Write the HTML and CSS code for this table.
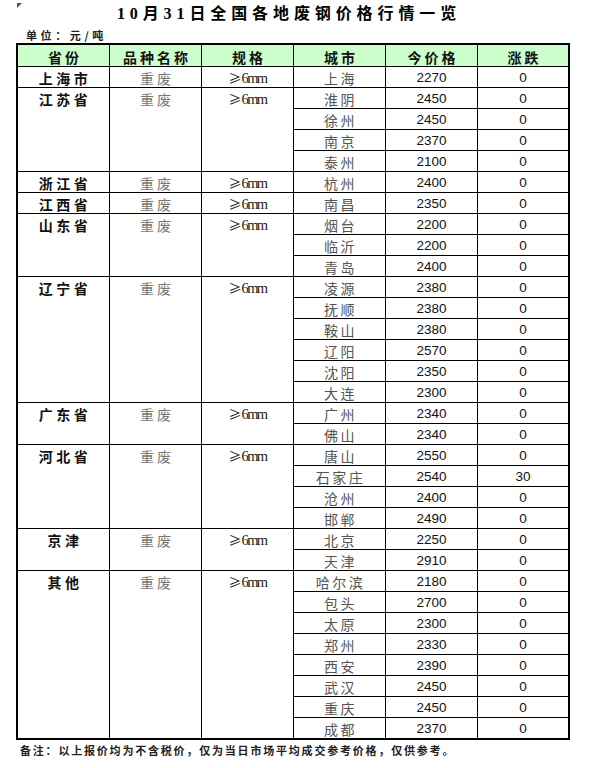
FILE: index.html
```html
<!DOCTYPE html>
<html lang="zh-CN">
<head>
<meta charset="utf-8">
<title>10月31日全国各地废钢价格行情一览</title>
<link rel="stylesheet" href="styles.css">
</head>
<body>
<div class="page">
  <span class="marker"></span>
  <h1 class="title">10月31日全国各地废钢价格行情一览</h1>
  <div class="unit">单位：元/吨</div>
  <div class="sheet">
    <div class="hd">省份</div><div class="hd">品种名称</div><div class="hd">规格</div><div class="hd">城市</div><div class="hd">今价格</div><div class="hd">涨跌</div>

    <div class="prov">上海市</div><div class="kind">重废</div><div class="spec"><span class="ge">≥</span>6mm</div><div class="city">上海</div><div class="num">2270</div><div class="num">0</div>

    <div class="prov s4">江苏省</div><div class="kind s4">重废</div><div class="spec s4"><span class="ge">≥</span>6mm</div><div class="city">淮阴</div><div class="num">2450</div><div class="num">0</div>
    <div class="city">徐州</div><div class="num">2450</div><div class="num">0</div>
    <div class="city">南京</div><div class="num">2370</div><div class="num">0</div>
    <div class="city">泰州</div><div class="num">2100</div><div class="num">0</div>

    <div class="prov">浙江省</div><div class="kind">重废</div><div class="spec"><span class="ge">≥</span>6mm</div><div class="city">杭州</div><div class="num">2400</div><div class="num">0</div>

    <div class="prov">江西省</div><div class="kind">重废</div><div class="spec"><span class="ge">≥</span>6mm</div><div class="city">南昌</div><div class="num">2350</div><div class="num">0</div>

    <div class="prov s3">山东省</div><div class="kind s3">重废</div><div class="spec s3"><span class="ge">≥</span>6mm</div><div class="city">烟台</div><div class="num">2200</div><div class="num">0</div>
    <div class="city">临沂</div><div class="num">2200</div><div class="num">0</div>
    <div class="city">青岛</div><div class="num">2400</div><div class="num">0</div>

    <div class="prov s6">辽宁省</div><div class="kind s6">重废</div><div class="spec s6"><span class="ge">≥</span>6mm</div><div class="city">凌源</div><div class="num">2380</div><div class="num">0</div>
    <div class="city">抚顺</div><div class="num">2380</div><div class="num">0</div>
    <div class="city">鞍山</div><div class="num">2380</div><div class="num">0</div>
    <div class="city">辽阳</div><div class="num">2570</div><div class="num">0</div>
    <div class="city">沈阳</div><div class="num">2350</div><div class="num">0</div>
    <div class="city">大连</div><div class="num">2300</div><div class="num">0</div>

    <div class="prov s2">广东省</div><div class="kind s2">重废</div><div class="spec s2"><span class="ge">≥</span>6mm</div><div class="city">广州</div><div class="num">2340</div><div class="num">0</div>
    <div class="city">佛山</div><div class="num">2340</div><div class="num">0</div>

    <div class="prov s4">河北省</div><div class="kind s4">重废</div><div class="spec s4"><span class="ge">≥</span>6mm</div><div class="city">唐山</div><div class="num">2550</div><div class="num">0</div>
    <div class="city">石家庄</div><div class="num">2540</div><div class="num">30</div>
    <div class="city">沧州</div><div class="num">2400</div><div class="num">0</div>
    <div class="city">邯郸</div><div class="num">2490</div><div class="num">0</div>

    <div class="prov s2">京津</div><div class="kind s2">重废</div><div class="spec s2"><span class="ge">≥</span>6mm</div><div class="city">北京</div><div class="num">2250</div><div class="num">0</div>
    <div class="city">天津</div><div class="num">2910</div><div class="num">0</div>

    <div class="prov s8">其他</div><div class="kind s8">重废</div><div class="spec s8"><span class="ge">≥</span>6mm</div><div class="city">哈尔滨</div><div class="num">2180</div><div class="num">0</div>
    <div class="city">包头</div><div class="num">2700</div><div class="num">0</div>
    <div class="city">太原</div><div class="num">2300</div><div class="num">0</div>
    <div class="city">郑州</div><div class="num">2330</div><div class="num">0</div>
    <div class="city">西安</div><div class="num">2390</div><div class="num">0</div>
    <div class="city">武汉</div><div class="num">2450</div><div class="num">0</div>
    <div class="city">重庆</div><div class="num">2450</div><div class="num">0</div>
    <div class="city">成都</div><div class="num">2370</div><div class="num">0</div>
  </div>
  <p class="note">备注：以上报价均为不含税价，仅为当日市场平均成交参考价格，仅供参考。</p>
</div>
</body>
</html>
```

FILE: styles.css
```css
html, body {
  margin: 0;
  padding: 0;
  background: #ffffff;
}

body {
  font-family: "Noto Sans CJK SC", "Liberation Sans", sans-serif;
  color: #000;
  width: 593px;
}

.page {
  position: relative;
  padding-left: 16px;
  width: 554px;
}

.marker {
  position: absolute;
  left: 17px;
  top: 3px;
  width: 0;
  height: 0;
  border-top: 5px solid #1f7a1f;
  border-right: 5px solid transparent;
}

.title {
  margin: 0;
  height: 28px;
  line-height: 28px;
  font-family: "Liberation Serif", "Noto Sans CJK SC", serif;
  font-size: 16px;
  font-weight: bold;
  letter-spacing: 4.9px;
  text-align: center;
  box-sizing: border-box;
  width: 546px;
}

.unit {
  height: 15px;
  line-height: 15px;
  padding-left: 10px;
  font-size: 11px;
  font-weight: bold;
  letter-spacing: 3.6px;
  color: #222;
}

.sheet {
  display: grid;
  grid-template-columns: 92px 92px 92px 92px 92px 91px;
  grid-template-rows: 22px;
  grid-auto-rows: 21px;
  width: 554px;
  box-sizing: border-box;
  border-top: 2px solid #000;
  border-left: 2px solid #000;
  border-right: 1px solid #000;
  border-bottom: 1px solid #000;
}

.sheet > div {
  box-sizing: border-box;
  border-right: 1px solid #000;
  border-bottom: 1px solid #000;
  text-align: center;
  white-space: nowrap;
  line-height: 20px;
  padding-top: 1px;
  overflow: hidden;
}

.s2 { grid-row: span 2; }
.s3 { grid-row: span 3; }
.s4 { grid-row: span 4; }
.s6 { grid-row: span 6; }
.s8 { grid-row: span 8; }

.sheet > .hd {
  background: #ccffcc;
  font-size: 14px;
  font-weight: bold;
  letter-spacing: 3px;
  padding-left: 3px;
  padding-top: 2px;
  color: #111;
}

.prov {
  font-size: 14px;
  font-weight: bold;
  letter-spacing: 3.5px;
  padding-left: 3px;
  color: #111;
}

.kind {
  font-size: 14px;
  color: #777;
  letter-spacing: 3px;
  padding-left: 3px;
}

.spec {
  font-family: "Liberation Serif", serif;
  font-size: 14.5px;
  letter-spacing: -1.6px;
  color: #222;
}

.ge {
  font-family: "Noto Sans CJK SC", sans-serif;
  font-size: 13px;
  letter-spacing: 0;
}

.sheet > .city {
  font-size: 14px;
  color: #555;
  letter-spacing: 2.5px;
  padding-left: 2px;
}

.sheet > .num {
  font-family: "Liberation Sans", sans-serif;
  font-size: 13.5px;
  color: #111;
}

.note {
  margin: 3px 0 0 4px;
  font-size: 11px;
  font-weight: bold;
  letter-spacing: 1.8px;
  line-height: 14px;
  color: #222;
}
```
